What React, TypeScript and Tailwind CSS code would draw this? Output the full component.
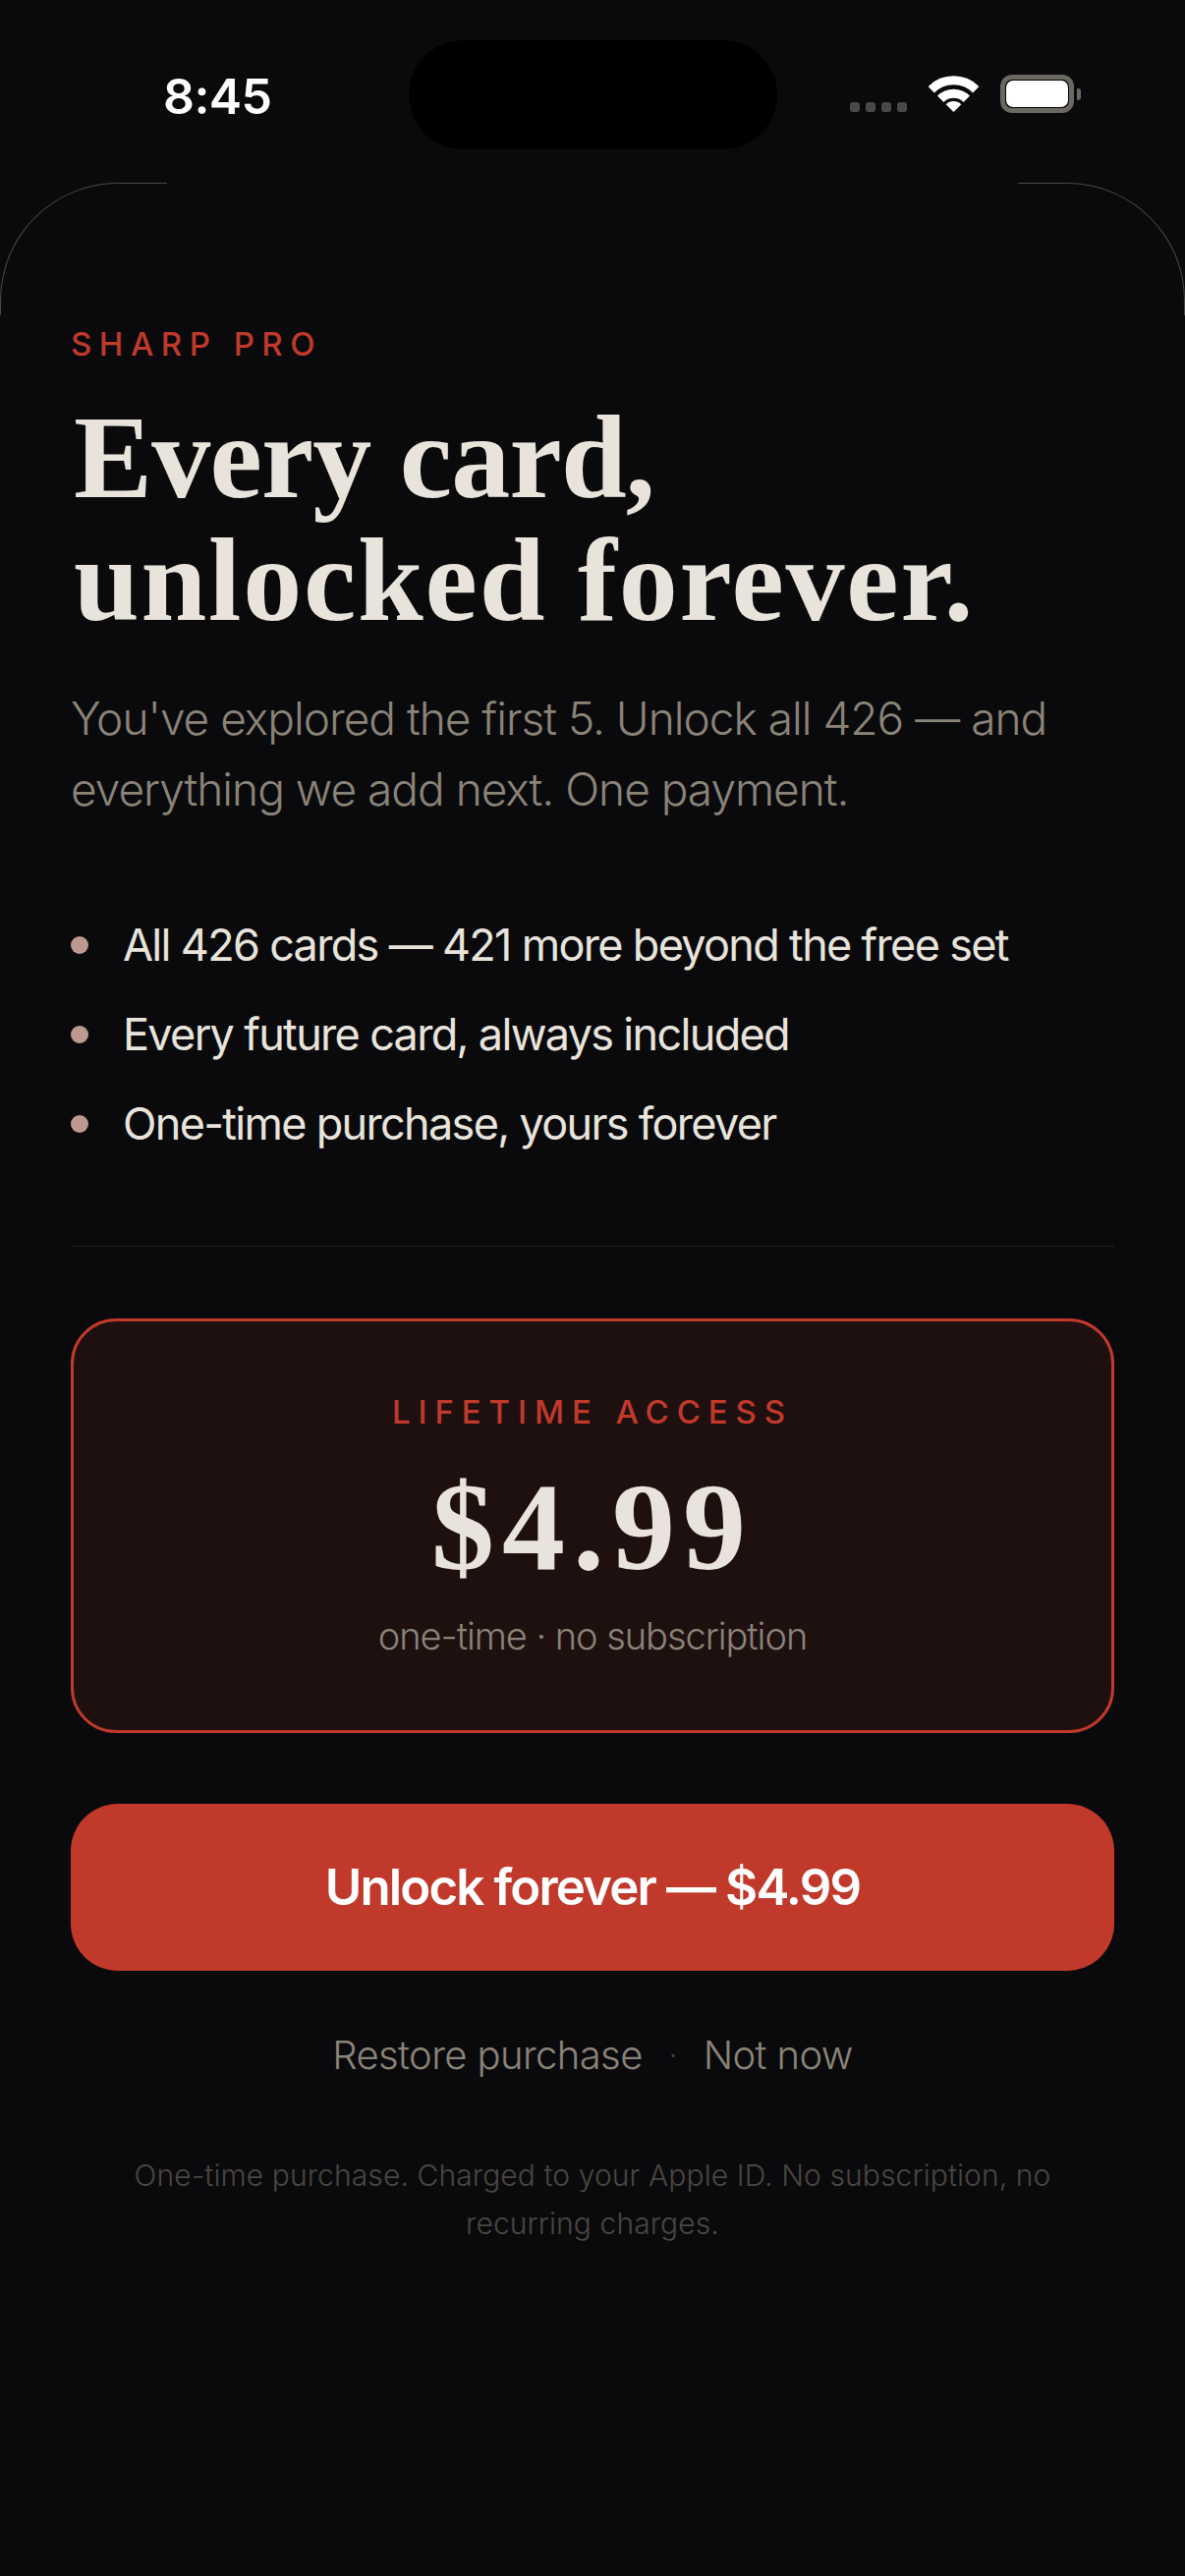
export default function App() {
  const sans = "font-['Inter','Noto_Sans',sans-serif]";
  const serif = "font-['Liberation_Serif',serif]";
  const features = [
    "All 426 cards — 421 more beyond the free set",
    "Every future card, always included",
    "One-time purchase, yours forever",
  ];
  return (
    <div className={`relative min-h-[2622px] w-[1206px] overflow-hidden bg-[#0a0a0d] ${sans}`}>
      <div className="absolute left-[416px] top-[41px] h-[111px] w-[375px] rounded-[56px] bg-black" />
      <header className="flex h-[186px] items-start justify-between pl-[166px] pr-[106px] pt-[70px]">
        <span className="text-[50px] font-semibold leading-[56px] tracking-[-0.6px] text-white">8:45</span>
        <div className="flex h-[40px] items-center pt-[11px]">
          <div className="mr-[22px] mt-[27px] flex gap-[6px]">
            <span className="h-[10px] w-[10px] rounded-[3px] bg-[#4b4945]" />
            <span className="h-[10px] w-[10px] rounded-[3px] bg-[#4b4945]" />
            <span className="h-[10px] w-[10px] rounded-[3px] bg-[#4b4945]" />
            <span className="h-[10px] w-[10px] rounded-[3px] bg-[#4b4945]" />
          </div>
          <svg width="51" height="37" viewBox="0 0 51 37" className="mr-[22px]" fill="none">
            <path d="M2.7 14.3 A32.2 32.2 0 0 1 48.3 14.3" stroke="#fff" strokeWidth="9" />
            <path d="M12.2 23.7 A18.8 18.8 0 0 1 38.8 23.7" stroke="#fff" strokeWidth="9" />
            <path d="M17.7 29.2 A11 11 0 0 1 33.3 29.2 L25.5 37 Z" fill="#fff" />
          </svg>
          <div className="flex items-center">
            <div className="h-[39px] w-[75px] rounded-[12px] border-[5px] border-[#6b6862] bg-black p-[1px]">
              <div className="h-full w-full rounded-[7px] bg-white" />
            </div>
            <span className="ml-[3px] h-[12px] w-[4px] rounded-r-[3px] bg-[#6b6862]" />
          </div>
        </div>
      </header>

      <div className="pointer-events-none absolute left-0 top-[186px] h-[135px] w-[170px] rounded-tl-[120px] border-l border-t border-[#4a4845]" />
      <div className="pointer-events-none absolute right-0 top-[186px] h-[135px] w-[170px] rounded-tr-[120px] border-r border-t border-[#4a4845]" />

      <main className="px-[72px] pt-[144px]">
        <p className="text-[33px] font-medium leading-[40px] tracking-[7.5px] text-[#c0392b]">SHARP PRO</p>
        <h1 className={`mt-[33px] pl-[3px] text-[120px] font-bold leading-[125px] text-[#e8e4dc] ${serif}`}>
          <span className="tracking-[-0.8px]">Every card,</span>
          <br />
          <span className="tracking-[1.8px]">unlocked forever.</span>
        </h1>
        <p className="mt-[42px] w-[1040px] text-[46px] font-light leading-[72px] tracking-[-1px] text-[#8a8478]">
          You've explored the first 5. Unlock all 426 — and everything we add next. One payment.
        </p>
        <ul className="mt-[94px] flex flex-col gap-[33px]">
          {features.map((f) => (
            <li key={f} className="flex items-center gap-[35px]">
              <span className="h-[18px] w-[18px] rounded-full bg-[#bd9a90]" />
              <span className="text-[45px] leading-[58px] tracking-[-1.68px] text-[#e8e4dc]">{f}</span>
            </li>
          ))}
        </ul>
        <div className="mt-[95px] h-[1px] bg-[#23221f]" />
        <section className="mt-[73px] flex h-[422px] flex-col items-center rounded-[46px] border-[3px] border-[#c0392b] bg-[#1f1010] pt-[72px]">
          <p className="text-[33px] font-medium leading-[40px] tracking-[7.9px] text-[#c0392b]">LIFETIME ACCESS</p>
          <p className={`mt-[32px] text-[128px] font-bold leading-[130px] tracking-[8px] text-[#e8e4dc] ${serif}`}>$4.99</p>
          <p className="mt-[21px] text-[38px] font-light leading-[50px] tracking-[-1.05px] text-[#8a8478]">one-time · no subscription</p>
        </section>
        <button className="mt-[72px] flex h-[170px] w-full items-center justify-center rounded-[48px] bg-[#c0392b] text-[51px] font-semibold tracking-[-1.85px] text-white">
          Unlock forever — $4.99
        </button>
        <div className="mt-[59px] flex h-[54px] items-center justify-center text-[40px] font-light leading-[54px] tracking-[-0.6px] text-[#8a8478]">
          <span>Restore purchase</span>
          <span className="mx-[27px] text-[30px] text-[#4a4640]">·</span>
          <span>Not now</span>
        </div>
        <p className="mx-auto mt-[71px] w-[960px] text-center text-[30px] font-light leading-[49px] tracking-[0.1px] text-[#4a4640]">
          One-time purchase. Charged to your Apple ID. No subscription, no recurring charges.
        </p>
      </main>
    </div>
  );
}
